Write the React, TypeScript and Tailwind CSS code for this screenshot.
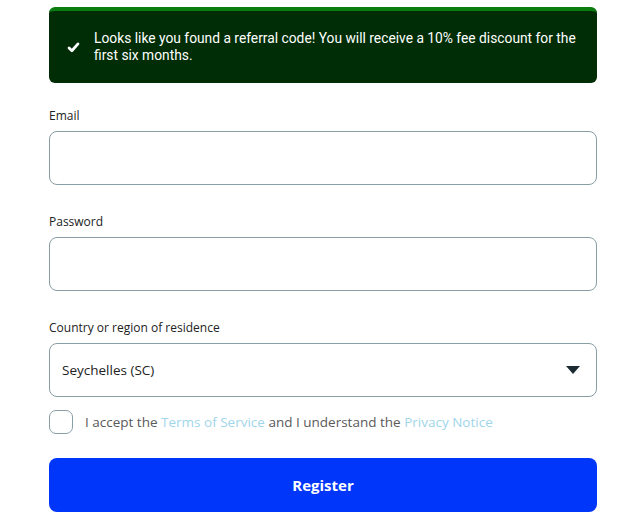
import { useState } from 'react';

export default function App() {
  const [accepted, setAccepted] = useState(false);

  return (
    <main className="min-h-[518px] bg-white font-['Open_Sans',sans-serif]">
      <div className="w-[548px] pt-[7px] ml-[49px]">
        <div className="flex items-center gap-[14px] rounded-[6px] border-t-[4px] border-[#0b7d10] bg-[#002d05] pl-[18px] pr-[10px] pt-[19px] pb-[19px] font-['Roboto',sans-serif] text-[13.8px] leading-[17px] text-white">
          <svg viewBox="0 0 16 16" className="h-[13px] w-[13px] shrink-0" fill="none" stroke="white" strokeWidth="3.4" strokeLinecap="round" strokeLinejoin="round">
            <path d="M2.5 8.5l3.5 3.5 7.5-8.5" />
          </svg>
          <p className="leading-[17px]">Looks like you found a referral code! You will receive a 10% fee discount for the first six months.</p>
        </div>

        <form className="mt-[24px]" onSubmit={(e) => e.preventDefault()}>
          <label className="block text-[12px] leading-[17px] text-[#222]">Email</label>
          <input type="email" className="mt-[7px] block h-[54px] w-full rounded-[8px] border border-[#8a9ea6] px-3 outline-none" />

          <label className="mt-[28px] block text-[12px] leading-[17px] text-[#222]">Password</label>
          <input type="password" className="mt-[7px] block h-[54px] w-full rounded-[8px] border border-[#8a9ea6] px-3 outline-none" />

          <label className="mt-[28px] block text-[12px] leading-[17px] text-[#222]">Country or region of residence</label>
          <div className="mt-[7px] flex h-[54px] w-full items-center justify-between rounded-[8px] border border-[#8a9ea6] pl-[12px] pr-[16px]">
            <span className="text-[13.5px] text-[#222]">Seychelles (SC)</span>
            <svg viewBox="0 0 14 8" className="h-[8px] w-[14px]">
              <path d="M0 0h14L7 8z" fill="#1c2b31" />
            </svg>
          </div>

          <div className="mt-[13px] flex items-center gap-[12px]">
            <button
              type="button"
              onClick={() => setAccepted(!accepted)}
              className="h-[24px] w-[24px] shrink-0 rounded-[7px] border border-[#8a9ea6] bg-white"
            />
            <p className="text-[13.5px] text-[#5a5a5a]">
              I accept the <span className="text-[#9fd6ea]">Terms of Service</span> and I understand the{' '}
              <span className="text-[#9fd6ea]">Privacy Notice</span>
            </p>
          </div>

          <button
            type="submit"
            className="mt-[24px] block h-[54px] w-full rounded-[8px] bg-[#0035fa] text-[15px] font-bold text-white"
          >
            Register
          </button>
        </form>
      </div>
    </main>
  );
}
